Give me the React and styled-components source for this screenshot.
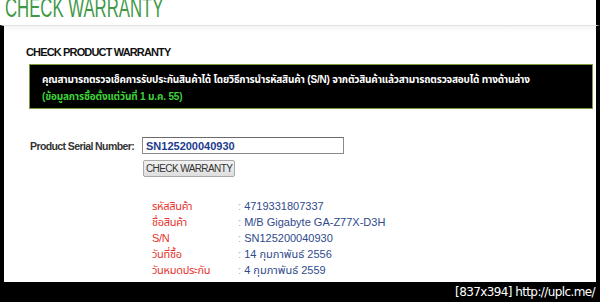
import React from "react";
import styled, { createGlobalStyle } from "styled-components";

const GlobalStyle = createGlobalStyle`
  html, body {
    margin: 0;
    padding: 0;
    background: #ffffff;
  }
  body {
    font-family: "Liberation Sans", Arial, "Noto Sans", sans-serif;
  }
`;

const Frame = styled.div`
  width: 600px;
  height: 302px;
  display: flex;
  flex-direction: column;
  box-sizing: border-box;
  overflow: hidden;
  background: #ffffff;
`;

const Header = styled.header`
  height: 25px;
  flex: none;
  display: flex;
  align-items: flex-end;
  padding: 0 4px 3px 5px;
  box-sizing: border-box;
  overflow: hidden;
  border-right: 4px solid #000;
`;

const Title = styled.h1`
  margin: 0;
  font-family: "Liberation Sans", Arial, sans-serif;
  font-weight: normal;
  font-size: 27px;
  line-height: 27px;
  color: #3f9a48;
  white-space: nowrap;
  transform: scaleX(0.62);
  transform-origin: left bottom;
`;

const Body = styled.main`
  flex: 1;
  display: flex;
  flex-direction: column;
  border-left: 4px solid #000;
  border-right: 4px solid #000;
  border-top: 1px solid #e2e2e2;
  background: linear-gradient(#f4f4f4, #ffffff 6px);
  padding: 0 3px 0 22px;
  min-height: 0;
`;

const Heading = styled.h2`
  margin: 20px 0 0;
  font-size: 11px;
  line-height: 13px;
  font-weight: bold;
  letter-spacing: -0.85px;
  color: #111;
`;

const Notice = styled.div`
  margin: 5px 0 0 3px;
  background: #000;
  border: 1px solid #7d9b3c;
  padding: 6px 12px 3px;
  font-family: "Liberation Sans", Tahoma, "Noto Sans Thai", "Noto Sans", sans-serif;
  font-size: 10px;
  line-height: 17px;
  letter-spacing: -0.18px;
  font-weight: bold;
  white-space: nowrap;
  overflow: hidden;
`;

const NoticeLine = styled.div`
  color: ${(p) => (p.$accent ? "#3fd23a" : "#ffffff")};
`;

const Form = styled.form`
  margin: 28px 0 0 4px;
  display: grid;
  grid-template-columns: 112px 202px;
  row-gap: 6px;
  align-items: center;
`;

const Label = styled.label`
  font-size: 10.5px;
  font-weight: bold;
  color: #333;
  letter-spacing: -0.6px;
  white-space: nowrap;
`;

const SerialInput = styled.input`
  height: 17px;
  box-sizing: border-box;
  border: 1px solid #8a8a8a;
  border-top-color: #6a6a6a;
  padding: 0 3px;
  font-family: "Liberation Sans", Arial, sans-serif;
  font-size: 11px;
  font-weight: bold;
  color: #1d3c8e;
  outline: none;
`;

const Button = styled.button`
  grid-column: 2;
  justify-self: start;
  margin-left: 1px;
  height: 17px;
  padding: 0 2px;
  box-sizing: border-box;
  border: 1px solid #a9a9a9;
  border-radius: 2px;
  background: linear-gradient(#f2f2f2, #dedede);
  font-family: "Liberation Sans", Arial, sans-serif;
  font-size: 10px;
  letter-spacing: -0.6px;
  white-space: nowrap;
  color: #333;
`;

const Results = styled.dl`
  margin: 21px 0 0 126px;
  display: grid;
  grid-template-columns: 86px auto;
  grid-auto-rows: 16px;
  align-items: center;
  font-family: "Liberation Sans", Tahoma, "Noto Sans Thai", "Noto Sans", sans-serif;
  font-size: 11px;
  line-height: 16px;
`;

const Term = styled.dt`
  margin: 0;
  color: #e5332d;
  letter-spacing: -0.3px;
`;

const Value = styled.dd`
  margin: 0;
  color: #2f4a8c;

  &::before {
    content: ": ";
    color: #b0b0b0;
  }
`;

const Footer = styled.footer`
  height: 20px;
  flex: none;
  background: #000;
  display: flex;
  align-items: center;
  justify-content: flex-end;
  padding-right: 5px;
  font-family: "DejaVu Sans", sans-serif;
  font-size: 12px;
  letter-spacing: -0.6px;
  color: #fff;
`;

const details = [
  ["รหัสสินค้า", "4719331807337"],
  ["ชื่อสินค้า", "M/B Gigabyte GA-Z77X-D3H"],
  ["S/N", "SN125200040930"],
  ["วันที่ซื้อ", "14 กุมภาพันธ์ 2556"],
  ["วันหมดประกัน", "4 กุมภาพันธ์ 2559"],
];

export default function App() {
  return (
    <>
      <GlobalStyle />
      <Frame>
        <Header>
          <Title>CHECK WARRANTY</Title>
        </Header>
        <Body>
          <Heading>CHECK PRODUCT WARRANTY</Heading>
          <Notice>
            <NoticeLine>
              คุณสามารถตรวจเช็คการรับประกันสินค้าได้ โดยวิธีการนำรหัสสินค้า (S/N) จากตัวสินค้าแล้วสามารถตรวจสอบได้ ทางด้านล่าง
            </NoticeLine>
            <NoticeLine $accent>(ข้อมูลการซื้อตั้งแต่วันที่ 1 ม.ค. 55)</NoticeLine>
          </Notice>
          <Form onSubmit={(e) => e.preventDefault()}>
            <Label htmlFor="serial">Product Serial Number:</Label>
            <SerialInput id="serial" defaultValue="SN125200040930" />
            <Button type="submit">CHECK WARRANTY</Button>
          </Form>
          <Results>
            {details.map(([k, v]) => (
              <React.Fragment key={k}>
                <Term>{k}</Term>
                <Value>{v}</Value>
              </React.Fragment>
            ))}
          </Results>
        </Body>
        <Footer>[837x394] http://uplc.me/</Footer>
      </Frame>
    </>
  );
}
